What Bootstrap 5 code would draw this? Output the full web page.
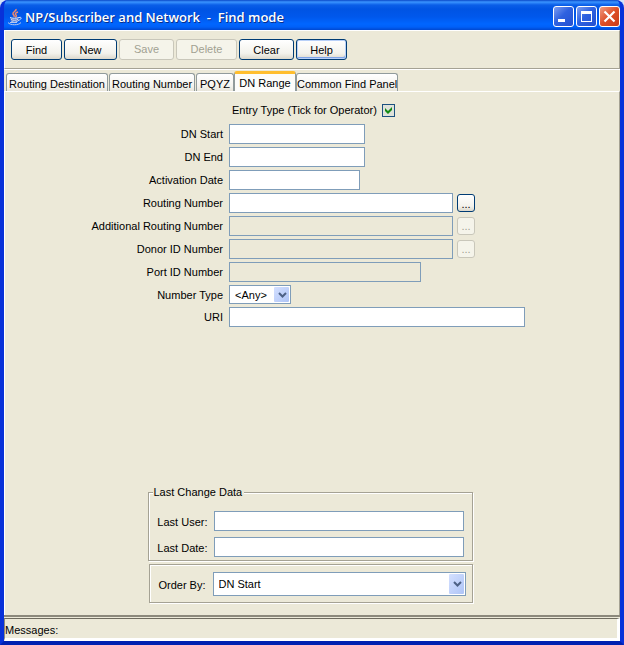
<!DOCTYPE html>
<html lang="en">
<head>
<meta charset="utf-8">
<meta name="viewport" content="width=device-width, initial-scale=1">
<title>NP/Subscriber and Network - Find mode</title>
<link href="https://cdn.jsdelivr.net/npm/bootstrap@5.3.0/dist/css/bootstrap.min.css" rel="stylesheet">
<style>
:root{--face:#ece9d8;--edge:#7f9db9;--etch:#a5a294}
body{font-family:"Liberation Sans",Arial,sans-serif;font-size:11px;line-height:14px;color:#000;background:#d4e4f8}
.win{background:#0a48dc;border:solid #0833c8;border-width:0 4px 4px;border-color:#0a3fdc #0831d9 #0020b0 #0831d9;border-radius:8px 8px 0 0;overflow:hidden}
.titlebar{height:30px;margin:0 -4px;padding:3px 4px 0 7px;background:linear-gradient(#0a48c8 0,#3a94ff 2px,#0a5ee8 5px,#0054e3 9px,#0058ec 17px,#0066ff 24px,#0060f8 27px,#0048d0 30px)}
.titlebar h1{font:600 13px/20px "Open Sans","Noto Sans",sans-serif;color:#fff;text-shadow:1px 1px #0a2f8a;white-space:pre;margin:0 0 0 2px}
.caps{gap:2px}
.cap{width:21px;height:21px;border:1px solid #fff;border-radius:3px;background:linear-gradient(135deg,#7c9df0,#2f62e0 45%,#2450d0)}
.cap.shut{background:linear-gradient(135deg,#f09a80,#dd4f28 50%,#c83c18)}
.client{background:var(--face)}
.toolbar{gap:2px;padding:8px 6px 8px;border:1px solid var(--etch);border-top-color:#fff;border-left-color:#fff;height:39px}
.xp{font-size:11px;line-height:14px;color:#000;border:1px solid #003c74;border-radius:3px;background:linear-gradient(#fff,#f3f2ec 70%,#dcd8cc);padding:1px 0 0;height:21px}
.xp:disabled{color:#a1a192;border-color:#c9c7ba;background:#f5f4ea;opacity:1;padding-bottom:1px;padding-top:0}
.xp.default{box-shadow:inset 0 0 0 1px #b8d0f8,inset -1px -2px #7fa4e8}
.w51{width:51px}.w53{width:53px}.w55{width:55px}.w61{width:61px}
.dots{width:18px;height:18px;line-height:12px;margin-left:4px}
.tabs{border:0;padding:0 2px;border-top:1px solid #fff;height:22px;gap:1px;align-items:flex-end}
.tabs .nav-link{font-size:11px;line-height:14px;color:#000;height:18px;padding:3px 0 0;margin:0;border:1px solid #919b9c;border-bottom:0;border-radius:3px 3px 0 0;background:linear-gradient(#fff,#f4f3ee 70%,#e8e5da);white-space:nowrap}
.tabs .nav-link.active{height:20px;padding:1px 0 0;margin:0 -1px;color:#000;background:#fcfcfa;border-color:#919b9c;border-top:3px solid #ffbe2e;z-index:1}
.t38{min-width:38px}.t62{min-width:62px}.t86{min-width:86px}.t102{min-width:102px}
.page{border:1px solid #fff;border-right-color:var(--etch);border-bottom:0;padding:11px 12px 12px 8px}
.finder{width:430px;padding-left:2px;gap:3px}
.finder .lbl{width:126px;margin-right:6px;display:flex;justify-content:flex-end;white-space:nowrap}
.tickrow{padding:0 0 0 135px;height:14px;margin-bottom:4px}
.tickrow input{appearance:none;width:13px;height:13px;margin:0 0 0 5px;border:1px solid #1c5180;background:#dfe2da}
.tickrow input:checked{background-image:url("data:image/svg+xml,%3Csvg xmlns='http://www.w3.org/2000/svg' viewBox='0 0 11 11'%3E%3Cpath d='M2 3l3 3 4-4v3L5 9 2 6z' fill='%23148a14'/%3E%3C/svg%3E")}
.field{height:20px;padding:0 4px;border:1px solid var(--edge);border-radius:0;background:#fff;font-size:11px;min-width:0}
.field:disabled{background:var(--face)}
.f131{width:131px}.f136{width:136px}.f192{width:192px}.f224{width:224px}.f296{width:296px}
.pick{appearance:none;border:1px solid var(--edge);border-radius:0;font-size:11px;line-height:14px;color:#000;padding:0 18px 0 5px;background:#fff url("data:image/svg+xml,%3Csvg xmlns='http://www.w3.org/2000/svg' viewBox='0 0 15 15' preserveAspectRatio='none'%3E%3ClinearGradient id='g' x2='1' y2='1'%3E%3Cstop stop-color='%23d4e0ff'/%3E%3Cstop offset='1' stop-color='%23aec4f6'/%3E%3C/linearGradient%3E%3Crect width='15' height='15' rx='1' fill='url(%23g)'/%3E%3C/svg%3E") no-repeat right 1px center/15px calc(100% - 2px)}
.pick-wrap{position:relative}
.pick-wrap svg{position:absolute;right:4px;top:50%;transform:translateY(-50%);pointer-events:none}
.kind{width:62px;height:19px}
.order{height:24px}
.groups{width:325px}
.frame{border:1px solid var(--etch);box-shadow:1px 1px #fff,inset 1px 1px #fff}
.change{padding:12px 8px 3px;gap:6px}
.change .lbl,.orderbox .lbl{text-align:right;white-space:nowrap}
.change .lbl{width:51px;margin-right:6px;padding-top:4px}
.change legend{float:none;width:auto;font-size:11px;line-height:14px;margin:0 0 0 -4px;padding:0 2px 0 1px;background:var(--face)}
.change,.orderbox{min-width:0}
.orderbox{padding:7px 6px 6px;margin:3px 0 0 1px}
.orderbox .lbl{width:50px;margin-right:7px;padding-top:1px}
.status{border-top:2px solid #8c897c;padding:1px 0 0}
.status output{border:solid;border-width:1px 3px 3px 1px;border-color:#6f6c60 #fff #fff #8c897c;height:23px;padding-top:4px}
</style>
</head>
<body>
<main class="win d-flex flex-column min-vh-100">
  <header class="titlebar d-flex align-items-center flex-shrink-0">
    <svg width="16" height="18" viewBox="0 0 16 18" fill="none" aria-hidden="true">
      <path d="M9 1c1 2-4 3-3 5 0 1 2 1 1 3M11 4C8 5 8 6 9 7s0 2-1 2" stroke="#f08a70" stroke-width="1.5"/>
      <path d="M3 9.500c2 1 7 1 9 0l-1 4H4z" fill="#5878c8"/>
      <path d="M3 9.500c2 1 7 1 9 0M4 11.500c2 1 5 1 7 0M4.500 13.500c2 1 4 1 6 0M12 9.500c3-1 3 2-1 3" stroke="#dce6fa"/>
      <path d="M1 14.500c2 3 11 3 13 0M3 14.500h7" stroke="#b4c6ee"/>
    </svg>
    <h1 class="flex-grow-1">NP/Subscriber and Network  -  Find mode</h1>
    <div class="caps d-flex">
      <button type="button" class="cap p-0 d-flex" aria-label="Minimize"><svg width="19" height="19"><path d="M4 12h7v3H4z" fill="#fff"/></svg></button>
      <button type="button" class="cap p-0 d-flex" aria-label="Maximize"><svg width="19" height="19"><path d="M4 4h11v11H4zM5 7v7h9V7z" fill="#fff" fill-rule="evenodd"/></svg></button>
      <button type="button" class="cap shut p-0 d-flex" aria-label="Close"><svg width="19" height="19"><path d="M4.500 4.500l10 10m0-10l-10 10" stroke="#fff" stroke-width="2.200"/></svg></button>
    </div>
  </header>

  <div class="client d-flex flex-column flex-grow-1">
    <div class="toolbar d-flex" role="toolbar">
      <button type="button" class="btn xp w51">Find</button>
      <button type="button" class="btn xp w53">New</button>
      <button type="button" class="btn xp w55" disabled>Save</button>
      <button type="button" class="btn xp w61" disabled>Delete</button>
      <button type="button" class="btn xp w55">Clear</button>
      <button type="button" class="btn xp w51 default">Help</button>
    </div>

    <div class="nav nav-tabs tabs flex-nowrap" role="tablist">
      <button type="button" class="nav-link t102" role="tab">Routing Destination</button>
      <button type="button" class="nav-link t86" role="tab">Routing Number</button>
      <button type="button" class="nav-link t38" role="tab">PQYZ</button>
      <button type="button" class="nav-link t62 active" role="tab" aria-selected="true">DN Range</button>
      <button type="button" class="nav-link t102" role="tab">Common Find Panel</button>
    </div>

    <form class="page d-flex flex-column flex-grow-1">
      <div class="finder d-flex flex-column mx-auto">
        <div class="tickrow d-flex align-items-center">
          <label for="op">Entry Type (Tick for Operator)</label><input type="checkbox" id="op" checked>
        </div>
        <div class="d-flex align-items-center"><label class="lbl" for="s">DN Start</label><input class="field f136" type="text" id="s"></div>
        <div class="d-flex align-items-center"><label class="lbl" for="e">DN End</label><input class="field f136" type="text" id="e"></div>
        <div class="d-flex align-items-center"><label class="lbl" for="a">Activation Date</label><input class="field f131" type="text" id="a"></div>
        <div class="d-flex align-items-center"><label class="lbl" for="r">Routing Number</label><input class="field f224" type="text" id="r"><button type="button" class="btn xp dots" aria-label="Choose routing number">...</button></div>
        <div class="d-flex align-items-center"><label class="lbl" for="ar">Additional Routing Number</label><input class="field f224" type="text" id="ar" disabled><button type="button" class="btn xp dots" disabled aria-label="Choose additional routing number">...</button></div>
        <div class="d-flex align-items-center"><label class="lbl" for="d">Donor ID Number</label><input class="field f224" type="text" id="d" disabled><button type="button" class="btn xp dots" disabled aria-label="Choose donor">...</button></div>
        <div class="d-flex align-items-center"><label class="lbl" for="p">Port ID Number</label><input class="field f192" type="text" id="p" disabled></div>
        <div class="d-flex align-items-center"><label class="lbl" for="t">Number Type</label>
          <div class="pick-wrap d-flex"><select class="pick kind" id="t"><option>&lt;Any&gt;</option></select><svg width="9" height="6" aria-hidden="true"><path d="M1 1l3.500 3.500L8 1" fill="none" stroke="#4d6185" stroke-width="2"/></svg></div>
        </div>
        <div class="d-flex align-items-center"><label class="lbl" for="u">URI</label><input class="field f296" type="text" id="u"></div>
      </div>

      <div class="groups mx-auto mt-auto">
        <fieldset class="frame change d-flex flex-column">
          <legend>Last Change Data</legend>
          <div class="d-flex"><label class="lbl" for="lu">Last User:</label><input class="field flex-grow-1" type="text" id="lu"></div>
          <div class="d-flex"><label class="lbl" for="ld">Last Date:</label><input class="field flex-grow-1" type="text" id="ld"></div>
        </fieldset>
        <div class="frame orderbox d-flex align-items-center">
          <label class="lbl" for="o">Order By:</label>
          <div class="pick-wrap d-flex flex-grow-1"><select class="pick order w-100" id="o"><option>DN Start</option></select><svg width="9" height="6" aria-hidden="true"><path d="M1 1l3.500 3.500L8 1" fill="none" stroke="#4d6185" stroke-width="2"/></svg></div>
        </div>
      </div>
    </form>

    <footer class="status"><output class="d-block">Messages:</output></footer>
  </div>
</main>
<script src="https://cdn.jsdelivr.net/npm/bootstrap@5.3.0/dist/js/bootstrap.bundle.min.js"></script>
</body>
</html>
